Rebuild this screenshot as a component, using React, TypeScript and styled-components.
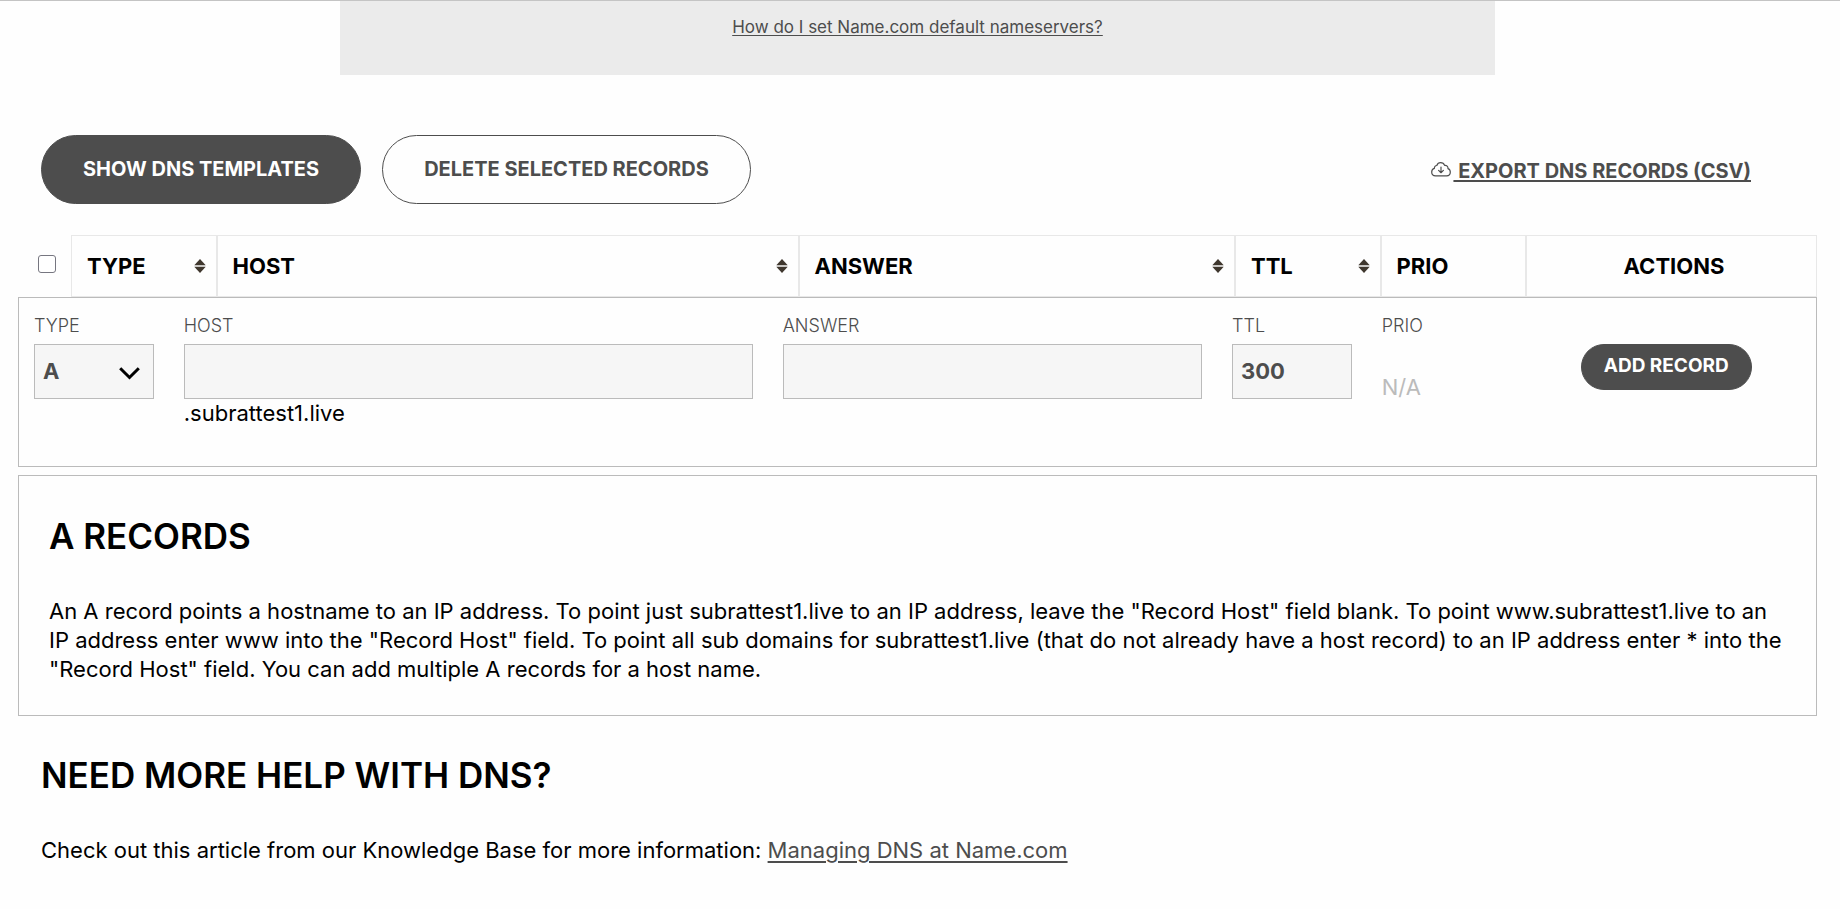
import React from "react";
import styled, { createGlobalStyle, css } from "styled-components";

const ink = "#4d4d4d";
const line = "#bbbbbb";
const paleLine = "#e8e8e8";

const GlobalStyle = createGlobalStyle`
  *, *::before, *::after { box-sizing: border-box; }
  body {
    margin: 0;
    background: #fefefe;
    color: #000;
    font-family: Inter, "Liberation Sans", sans-serif;
    font-size: 22px;
    line-height: 29px;
  }
  button, input, select { font-family: inherit; }
`;

const Page = styled.main`
  border-top: 1px solid #c4c4c4;
  padding: 0 23px 0 18px;
`;

const NameserverPanel = styled.aside`
  display: flex;
  justify-content: center;
  width: 66%;
  max-width: 1155px;
  height: 74px;
  margin: 0 auto;
  padding-top: 14px;
  background: #ebebeb;
`;

const TextLink = styled.a<{ $small?: boolean }>`
  color: ${ink};
  text-decoration: underline;
  text-underline-offset: 3px;
  ${({ $small }) =>
    $small
      ? css`
          font-size: 17px;
          line-height: 24px;
          text-decoration-thickness: 1px;
          text-underline-offset: 2px;
        `
      : css`
          text-decoration-thickness: 2px;
        `}
`;

const Toolbar = styled.div`
  display: flex;
  align-items: center;
  gap: 21px;
  margin: 60px 0 31px;
  padding: 0 66px 0 23px;
`;

const PillButton = styled.button<{ $outline?: boolean; $compact?: boolean }>`
  display: flex;
  align-items: center;
  justify-content: center;
  height: ${({ $compact }) => ($compact ? 46 : 69)}px;
  padding: 0 ${({ $compact }) => ($compact ? 22 : 41)}px 2px;
  border: 1px solid ${ink};
  border-radius: 35px;
  background: ${({ $outline }) => ($outline ? "#fefefe" : ink)};
  color: ${({ $outline }) => ($outline ? ink : "#fff")};
  font-size: ${({ $compact }) => ($compact ? 19 : 20)}px;
  font-weight: 700;
  line-height: 24px;
  white-space: nowrap;
  cursor: pointer;
`;

const ExportLink = styled.a`
  display: flex;
  align-items: center;
  gap: 2px;
  margin-left: auto;
  padding-top: 4px;
  color: ${ink};
  font-size: 20px;
  font-weight: 700;
  text-decoration: none;
  white-space: pre;

  svg { margin-bottom: 5px; }
  span {
    text-decoration: underline;
    text-decoration-thickness: 2px;
    text-underline-offset: 2px;
  }
`;

const RecordTable = styled.table`
  display: block;
  width: 100%;
`;

const TableHead = styled.thead`
  display: block;
`;

const HeadRow = styled.tr`
  display: grid;
  grid-template-columns: 53px 1fr 4fr 3fr 1fr 1fr 2fr;
  height: 62px;
`;

const SelectAllCell = styled.th`
  display: flex;
  align-items: center;
  padding: 0 0 4px 20px;
`;

const HeadCell = styled.th<{ $center?: boolean }>`
  display: flex;
  align-items: center;
  justify-content: ${({ $center }) => ($center ? "center" : "flex-start")};
  min-width: 0;
  padding: 0 10px 0 15px;
  border: 1px solid ${paleLine};
  font-weight: 700;
`;

const SortButton = styled.button`
  display: flex;
  align-items: center;
  justify-content: space-between;
  width: 100%;
  padding: 0;
  border: 0;
  background: none;
  color: inherit;
  font-size: 22px;
  font-weight: 700;
  line-height: 29px;
  cursor: pointer;
`;

const CheckBox = styled.input`
  appearance: none;
  width: 18px;
  height: 18px;
  margin: 0;
  border: 1px solid #767680;
  border-radius: 3px;
  background: #fff;

  &:checked { background: ${ink}; }
`;

const RecordForm = styled.form`
  display: grid;
  grid-template-columns: 1fr 4fr 3fr 1fr 1fr 2fr;
  padding: 16px 0 38px;
  border: 1px solid ${line};
`;

const Field = styled.div`
  display: flex;
  flex-direction: column;
  min-width: 0;
  padding: 0 15px;
`;

const FieldLabel = styled.label`
  margin-bottom: 6px;
  color: ${ink};
  font-size: 18px;
  font-weight: 300;
  line-height: 24px;
`;

const control = css`
  width: 100%;
  height: 55px;
  padding: 0 8px 2px;
  border: 1px solid ${line};
  border-radius: 0;
  background: #f6f6f6;
  color: ${ink};
  font-size: 22px;
  font-weight: 700;
`;

const TextInput = styled.input`
  ${control}
`;

const SelectWrap = styled.div`
  display: grid;
  align-items: center;

  > * { grid-area: 1 / 1; }
  svg {
    justify-self: end;
    margin: 4px 14px 0 0;
    pointer-events: none;
  }
`;

const TypeSelect = styled.select`
  ${control}
  appearance: none;
`;

const EmptyValue = styled.output`
  margin-top: 29px;
  color: ${line};
`;

const FormAction = styled.div`
  display: flex;
  align-items: flex-start;
  justify-content: center;
  padding-top: 30px;
`;

const InfoPanel = styled.section`
  margin-top: 8px;
  padding: 38px 30px 31px;
  border: 1px solid ${line};
`;

const HelpSection = styled.section`
  padding: 37px 23px 45px;
`;

const Heading = styled.h2`
  margin: 0 0 39px;
  font-size: 35px;
  font-weight: 600;
  line-height: 44px;
`;

const Paragraph = styled.p`
  margin: 0;
`;

const SortIcon = () => (
  <svg width="12" height="14" viewBox="0 0 12 14" fill="#3f372e" aria-hidden="true">
    <path d="M6 0L11.500 6H.5z" />
    <path d="M.5 6H11.500V8H.5z" fill="#c9c7c4" />
    <path d="M6 14L11.500 8H.5z" />
  </svg>
);

const CloudDownloadIcon = () => (
  <svg width="20" height="15" viewBox="0 0 20 15" fill="none" stroke={ink} strokeWidth="1.200" strokeLinecap="round" strokeLinejoin="round" aria-hidden="true">
    <path d="M4.600 13.900C2.200 13.900.7 12.200.7 10.100c0-1.900 1-3.200 2.700-3.700C3.200 4.600 4.300 3.500 5.800 3.500 6.500 1.700 7.700.7 9.500.7c2.100 0 3.500 1 4.100 2.700 2.200-.3 3.500 1.100 3.400 3.200 1.500.5 2.300 1.800 2.300 3.500 0 2.200-1.500 3.800-3.700 3.800z" />
    <path d="M10 5v5.500M7.600 8.400L10 10.700l2.400-2.300" />
  </svg>
);

const ChevronIcon = () => (
  <svg width="21" height="13" viewBox="0 0 21 13" fill="none" stroke="#000" strokeWidth="3" aria-hidden="true">
    <path d="M1.200 1.200L10.500 10.500 19.800 1.200" />
  </svg>
);

const columns = [
  { name: "TYPE", sortable: true },
  { name: "HOST", sortable: true },
  { name: "ANSWER", sortable: true },
  { name: "TTL", sortable: true },
  { name: "PRIO" },
  { name: "ACTIONS", center: true },
];

export default function App() {
  return (
    <>
      <GlobalStyle />
      <Page>
        <NameserverPanel>
          <TextLink $small href="#nameservers">How do I set Name.com default nameservers?</TextLink>
        </NameserverPanel>

        <Toolbar>
          <PillButton type="button">SHOW DNS TEMPLATES</PillButton>
          <PillButton type="button" $outline>DELETE SELECTED RECORDS</PillButton>
          <ExportLink href="#export">
            <CloudDownloadIcon />
            <span> EXPORT DNS RECORDS (CSV)</span>
          </ExportLink>
        </Toolbar>

        <RecordTable>
          <TableHead>
            <HeadRow>
              <SelectAllCell scope="col">
                <CheckBox type="checkbox" aria-label="Select all records" />
              </SelectAllCell>
              {columns.map(({ name, sortable, center }) => (
                <HeadCell key={name} scope="col" $center={center}>
                  {sortable ? (
                    <SortButton type="button">
                      {name}
                      <SortIcon />
                    </SortButton>
                  ) : (
                    name
                  )}
                </HeadCell>
              ))}
            </HeadRow>
          </TableHead>
        </RecordTable>

        <RecordForm onSubmit={(e) => e.preventDefault()}>
          <Field>
            <FieldLabel htmlFor="type">TYPE</FieldLabel>
            <SelectWrap>
              <TypeSelect id="type" defaultValue="A">
                <option>A</option>
              </TypeSelect>
              <ChevronIcon />
            </SelectWrap>
          </Field>
          <Field>
            <FieldLabel htmlFor="host">HOST</FieldLabel>
            <TextInput id="host" type="text" />
            <span>.subrattest1.live</span>
          </Field>
          <Field>
            <FieldLabel htmlFor="answer">ANSWER</FieldLabel>
            <TextInput id="answer" type="text" />
          </Field>
          <Field>
            <FieldLabel htmlFor="ttl">TTL</FieldLabel>
            <TextInput id="ttl" type="text" defaultValue="300" />
          </Field>
          <Field>
            <FieldLabel htmlFor="prio">PRIO</FieldLabel>
            <EmptyValue id="prio">N/A</EmptyValue>
          </Field>
          <FormAction>
            <PillButton type="submit" $compact>ADD RECORD</PillButton>
          </FormAction>
        </RecordForm>

        <InfoPanel>
          <Heading>A RECORDS</Heading>
          <Paragraph>
            An A record points a hostname to an IP address. To point just subrattest1.live to an IP address, leave the
            "Record Host" field blank. To point www.subrattest1.live to an IP address enter www into the "Record Host"
            field. To point all sub domains for subrattest1.live (that do not already have a host record) to an IP
            address enter * into the "Record Host" field. You can add multiple A records for a host name.
          </Paragraph>
        </InfoPanel>

        <HelpSection>
          <Heading>NEED MORE HELP WITH DNS?</Heading>
          <Paragraph>
            Check out this article from our Knowledge Base for more information:{" "}
            <TextLink href="#managing-dns">Managing DNS at Name.com</TextLink>
          </Paragraph>
        </HelpSection>
      </Page>
    </>
  );
}
